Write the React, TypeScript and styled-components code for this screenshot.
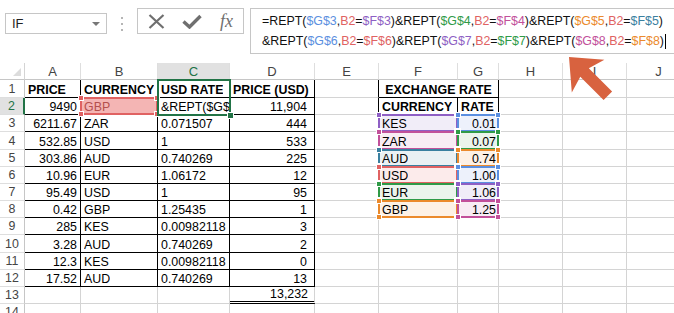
import React from 'react';
import styled, { createGlobalStyle } from 'styled-components';

const GlobalStyle = createGlobalStyle`
  html, body {
    margin: 0;
    padding: 0;
    background: #fff;
  }
  body {
    font-family: 'Liberation Sans', Arial, sans-serif;
  }
`;

const Window = styled.div`
  position: relative;
  width: 674px;
  height: 313px;
  overflow: hidden;
  background: #fff;
`;

/* ---------- formula bar ---------- */

const FormulaBar = styled.div`
  display: flex;
  align-items: flex-start;
  height: 63px;
`;

const NameBox = styled.div`
  box-sizing: border-box;
  margin: 13px 0 0 5px;
  width: 102px;
  height: 21px;
  border: 1px solid #c6c6c6;
  display: flex;
  align-items: center;
  justify-content: space-between;
  padding: 0 6px;
  font-size: 13px;
  color: #222;
`;

const Grip = styled.div`
  width: 30px;
  display: flex;
  flex-direction: column;
  align-items: center;
  gap: 4px;
  padding-top: 17px;

  span {
    width: 2px;
    height: 2px;
    background: #b5b5b5;
  }
`;

const IconBox = styled.div`
  box-sizing: border-box;
  margin-top: 8px;
  width: 107px;
  height: 26px;
  border: 1px solid #c6c6c6;
  display: flex;
  align-items: center;
`;

const IconSlot = styled.div<{ $w: number }>`
  width: ${p => p.$w}px;
  display: flex;
  justify-content: center;
  align-items: center;
`;

const Fx = styled.span`
  font-family: 'Liberation Serif', 'Times New Roman', serif;
  font-style: italic;
  font-size: 18px;
  color: #6f6f6f;
  line-height: 1;
`;

const FormulaBox = styled.div`
  box-sizing: border-box;
  flex: 1;
  margin: 8px 0 0 6px;
  height: 46px;
  border: 1px solid #c6c6c6;
  border-right: none;
  padding: 2px 0 0 11px;
  font-size: 12.4px;
  line-height: 20px;
  color: #111;
  white-space: nowrap;
`;

const Ref = styled.span<{ $c: string }>`
  color: ${p => p.$c};
`;

const Caret = styled.span`
  display: inline-block;
  width: 1px;
  height: 15px;
  margin-left: 1px;
  background: #000;
  vertical-align: middle;
`;

/* ---------- sheet ---------- */

const colW = [25, 56, 77, 72, 85, 64, 79, 41, 64, 64, 64];
const rowH = [18, 17, 17, 18, 17, 17, 17, 17, 17, 18, 17, 17, 17, 17];

const Sheet = styled.div`
  display: grid;
  grid-template-columns: ${colW.map(w => `${w}px`).join(' ')};
  grid-template-rows: 17px ${rowH.map(h => `${h}px`).join(' ')};
`;

const Corner = styled.div`
  box-sizing: border-box;
  border-right: 1px solid #d4d4d4;
  border-bottom: 1px solid #c6c6c6;
  display: flex;
  align-items: flex-end;
  justify-content: flex-end;
  padding: 0 3px 3px 0;
`;

const ColHead = styled.div<{ $active?: boolean }>`
  box-sizing: border-box;
  display: flex;
  align-items: center;
  justify-content: center;
  border-right: 1px solid #dedede;
  border-bottom: 1px solid ${p => (p.$active ? '#217346' : '#c6c6c6')};
  background: ${p => (p.$active ? '#e1e1e1' : '#fff')};
  color: ${p => (p.$active ? '#217346' : '#444')};
  font-size: 13px;
`;

const RowHead = styled.div<{ $active?: boolean }>`
  box-sizing: border-box;
  display: flex;
  align-items: center;
  justify-content: center;
  border-right: ${p => (p.$active ? '2px solid #217346' : '1px solid #c6c6c6')};
  border-bottom: 1px solid #dedede;
  background: ${p => (p.$active ? '#e1e1e1' : '#fff')};
  color: ${p => (p.$active ? '#217346' : '#444')};
  font-size: 12.4px;
`;

type Align = 'l' | 'r' | 'c';

const Cell = styled.div<{
  $al: Align;
  $b?: boolean;
  $br?: boolean;
  $bb?: boolean;
  $dbl?: boolean;
  $bg?: string;
  $span?: number;
  $pr?: number;
  $tc?: string;
}>`
  position: relative;
  box-sizing: border-box;
  min-width: 0;
  grid-column: span ${p => p.$span ?? 1};
  display: flex;
  align-items: flex-end;
  justify-content: ${p => (p.$al === 'r' ? 'flex-end' : p.$al === 'c' ? 'center' : 'flex-start')};
  padding: 0 ${p => p.$pr ?? 3}px 0 3px;
  background: ${p => p.$bg ?? '#fff'};
  border-right: 1px solid ${p => (p.$br ? '#000' : '#d4d4d4')};
  border-bottom: ${p => (p.$dbl ? '3px double #000' : `1px solid ${p.$bb ? '#000' : '#d4d4d4'}`)};
  font-size: 12.4px;
  font-weight: ${p => (p.$b ? 700 : 400)};
  color: ${p => p.$tc ?? '#000'};
`;

const Txt = styled.span`
  min-width: 0;
  overflow: hidden;
  white-space: nowrap;
  line-height: 14px;
`;

// coloured range outline that Excel draws while editing a formula
const RefBox = styled.div<{ $c: string }>`
  position: absolute;
  top: -1px;
  left: -1px;
  right: -1px;
  bottom: -1px;
  border: 2px solid ${p => p.$c};
  z-index: 2;
  pointer-events: none;
`;

const Handle = styled.span<{ $c: string; $v: 'top' | 'bottom'; $h: 'left' | 'right' }>`
  position: absolute;
  width: 4px;
  height: 4px;
  background: ${p => p.$c};
  box-shadow: 0 0 0 1px #fff;
  ${p => p.$v}: -3px;
  ${p => p.$h}: -3px;
`;

const ActiveBox = styled.div`
  position: absolute;
  top: -19px;
  left: -1px;
  right: -2px;
  bottom: -2px;
  border: 2px solid #217346;
  z-index: 3;
  pointer-events: none;
`;

const FillHandle = styled.span`
  position: absolute;
  right: -4px;
  bottom: -4px;
  width: 5px;
  height: 5px;
  background: #217346;
  box-shadow: 0 0 0 1px #fff;
`;

const Arrow = styled.svg`
  position: absolute;
  left: 565px;
  top: 52px;
  z-index: 5;
  pointer-events: none;
`;

/* ---------- data ---------- */

const C = {
  blue: '#5b8fe0',
  red: '#e06262',
  purple: '#8e5fc4',
  green: '#2f9a47',
  magenta: '#c2509a',
  orange: '#eb8a2c',
  teal: '#3a80a0',
};

const tint: Record<string, string> = {
  [C.blue]: '#edf1fb',
  [C.red]: '#fcebeb',
  [C.purple]: '#f1edf8',
  [C.green]: '#ebf4ec',
  [C.magenta]: '#f8ecf4',
  [C.orange]: '#fdf1e6',
  [C.teal]: '#eaf1f4',
};

type Spec = {
  v?: string;
  al?: Align;
  b?: boolean;
  br?: boolean;
  bb?: boolean;
  dbl?: boolean;
  span?: number;
  bg?: string;
  hl?: string;
  tc?: string;
  pr?: number;
  active?: boolean;
};

const prices: [string, string, string, string][] = [
  ['9490', 'GBP', '&REPT($G$', '11,904'],
  ['6211.67', 'ZAR', '0.071507', '444'],
  ['532.85', 'USD', '1', '533'],
  ['303.86', 'AUD', '0.740269', '225'],
  ['10.96', 'EUR', '1.06172', '12'],
  ['95.49', 'USD', '1', '95'],
  ['0.42', 'GBP', '1.25435', '1'],
  ['285', 'KES', '0.00982118', '3'],
  ['3.28', 'AUD', '0.740269', '2'],
  ['12.3', 'KES', '0.00982118', '0'],
  ['17.52', 'AUD', '0.740269', '13'],
];

const rates: [string, string, string, string][] = [
  ['KES', C.purple, '0.01', C.blue],
  ['ZAR', C.magenta, '0.07', C.green],
  ['AUD', C.teal, '0.74', C.orange],
  ['USD', C.red, '1.00', C.blue],
  ['EUR', C.green, '1.06', C.purple],
  ['GBP', C.orange, '1.25', C.magenta],
];

const formula: [string, string | null][][] = [
  [
    ['=REPT(', null], ['$G$3', C.blue], [',', null], ['B2', C.red], ['=', null], ['$F$3', C.purple],
    [')&REPT(', null], ['$G$4', C.green], [',', null], ['B2', C.red], ['=', null], ['$F$4', C.magenta],
    [')&REPT(', null], ['$G$5', C.orange], [',', null], ['B2', C.red], ['=', null], ['$F$5', C.teal],
    [')', null],
  ],
  [
    ['&REPT(', null], ['$G$6', C.blue], [',', null], ['B2', C.red], ['=', null], ['$F$6', C.red],
    [')&REPT(', null], ['$G$7', C.purple], [',', null], ['B2', C.red], ['=', null], ['$F$7', C.green],
    [')&REPT(', null], ['$G$8', C.magenta], [',', null], ['B2', C.red], ['=', null], ['$F$8', C.orange],
    [')', null],
  ],
];

function rowCells(r: number): Spec[] {
  const out: Spec[] = [];
  // A:D price table
  if (r === 1) {
    ['PRICE', 'CURRENCY', 'USD RATE', 'PRICE (USD)'].forEach(v => out.push({ v, b: true, br: true, bb: true }));
  } else if (r <= 12) {
    const [a, b, c, d] = prices[r - 2];
    out.push({ v: a, al: 'r', br: true, bb: true });
    if (r === 2) {
      out.push({ v: b, br: true, bb: true, bg: '#f4b5b4', hl: C.red, tc: '#b4504e' });
      out.push({ v: c, br: true, bb: true, pr: 0, active: true });
    } else {
      out.push({ v: b, br: true, bb: true });
      out.push({ v: c, br: true, bb: true });
    }
    out.push({ v: d, al: 'r', br: true, bb: true, pr: 7 });
  } else if (r === 13) {
    out.push({}, {}, {}, { v: '13,232', al: 'r', dbl: true, pr: 6 });
  } else {
    out.push({}, {}, {}, {});
  }
  // E
  out.push({ br: r <= 2 });
  // F:G exchange table
  if (r === 1) {
    out.push({ v: 'EXCHANGE RATE', b: true, al: 'c', span: 2, br: true, bb: true });
  } else if (r === 2) {
    out.push({ v: 'CURRENCY', b: true, br: true, bb: true }, { v: 'RATE', b: true, br: true, bb: true });
  } else if (r <= 8) {
    const [cur, cc, rate, rc] = rates[r - 3];
    out.push({ v: cur, bg: tint[cc], hl: cc }, { v: rate, al: 'r', bg: tint[rc], hl: rc, pr: 2 });
  } else {
    out.push({}, {});
  }
  // H:J
  out.push({}, {}, {});
  return out;
}

const handles: ['top' | 'bottom', 'left' | 'right'][] = [
  ['top', 'left'],
  ['top', 'right'],
  ['bottom', 'left'],
  ['bottom', 'right'],
];

const letters = ['A', 'B', 'C', 'D', 'E', 'F', 'G', 'H', 'I', 'J'];

const App: React.FC = () => {
  return (
    <Window>
      <GlobalStyle />
      <FormulaBar>
        <NameBox>
          <span>IF</span>
          <svg width="8" height="4" viewBox="0 0 8 4">
            <path d="M0 0 H8 L4 4 Z" fill="#777" />
          </svg>
        </NameBox>
        <Grip>
          <span />
          <span />
          <span />
        </Grip>
        <IconBox>
          <IconSlot $w={36}>
            <svg width="17" height="15" viewBox="0 0 17 15">
              <path d="M1.5 1 L15.5 14 M15.5 1 L1.5 14" stroke="#6f6f6f" strokeWidth="2.2" />
            </svg>
          </IconSlot>
          <IconSlot $w={36}>
            <svg width="20" height="15" viewBox="0 0 20 15">
              <path d="M1.5 7.5 L7.5 13 L18.5 2" stroke="#6f6f6f" strokeWidth="3.4" fill="none" />
            </svg>
          </IconSlot>
          <IconSlot $w={33}>
            <Fx>fx</Fx>
          </IconSlot>
        </IconBox>
        <FormulaBox>
          {formula.map((line, i) => (
            <div key={i}>
              {line.map(([t, c], j) => (c ? <Ref key={j} $c={c}>{t}</Ref> : <span key={j}>{t}</span>))}
              {i === 1 && <Caret />}
            </div>
          ))}
        </FormulaBox>
      </FormulaBar>

      <Sheet>
        <Corner>
          <svg width="8" height="8" viewBox="0 0 8 8">
            <path d="M8 0 V8 H0 Z" fill="#dcdcdc" />
          </svg>
        </Corner>
        {letters.map(l => (
          <ColHead key={l} $active={l === 'C'}>
            {l}
          </ColHead>
        ))}
        {rowH.map((_, i) => {
          const r = i + 1;
          return (
            <React.Fragment key={r}>
              <RowHead $active={r === 2}>{r}</RowHead>
              {rowCells(r).map((s, j) => (
                <Cell
                  key={j}
                  $al={s.al ?? 'l'}
                  $b={s.b}
                  $br={s.br}
                  $bb={s.bb}
                  $dbl={s.dbl}
                  $bg={s.bg}
                  $span={s.span}
                  $pr={s.pr}
                  $tc={s.tc}
                >
                  {s.v && <Txt>{s.v}</Txt>}
                  {s.hl && (
                    <RefBox $c={s.hl}>
                      {handles.map(([v, h]) => (
                        <Handle key={v + h} $c={s.hl!} $v={v} $h={h} />
                      ))}
                    </RefBox>
                  )}
                  {s.active && (
                    <ActiveBox>
                      <FillHandle />
                    </ActiveBox>
                  )}
                </Cell>
              ))}
            </React.Fragment>
          );
        })}
      </Sheet>

      <Arrow width="60" height="55" viewBox="0 0 60 55">
        <polygon
          points="4,5 39.4,7.8 23.8,16.3 47.1,39.6 38.6,48.1 15.3,24.8 6.8,40.4"
          fill="#d8623f"
        />
      </Arrow>
    </Window>
  );
};

export default App;
